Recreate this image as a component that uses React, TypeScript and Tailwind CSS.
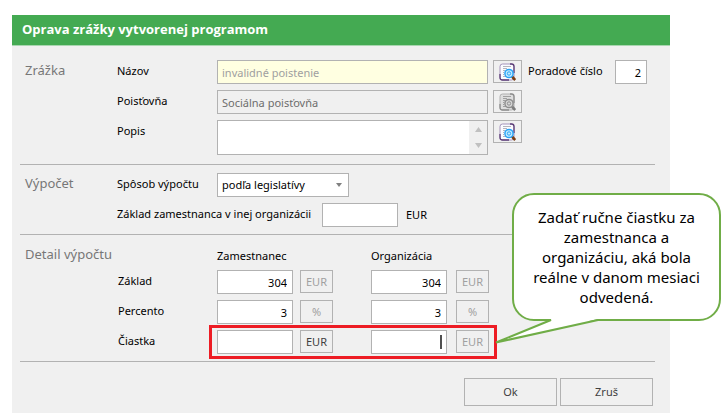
import { useState } from 'react';
import clsx from 'clsx';

const inputClass = 'h-6 border border-[#b2b2b2] bg-white px-[5px] text-right text-black outline-none';

function LookupIcon({ muted = false }: { muted?: boolean }) {
  const frame = muted ? '#8e8e8e' : '#5d3f78';
  const edge = muted ? '#b0b0b0' : '#a493bb';
  const lens = muted ? '#8f8f8f' : '#2ba3f5';
  const glass = muted ? '#d8d8d8' : '#c4ecff';
  const handle = muted ? '#7d7d7d' : '#7a3d12';

  return (
    <svg width="17" height="18" viewBox="0 0 17 18" aria-hidden="true">
      <rect x="1" y="1" width="14" height="16" rx="2.500" fill={muted ? '#dedede' : '#fbfbff'} stroke={edge} />
      <path d="M11 1H12.500Q15 1 15 3.500V10M1 11V14.500Q1 17 3.500 17H10" fill="none" stroke={frame} strokeWidth="1.300" />
      <path d="M4 3.500H12M4 5.500H8M4 7.500H6M4 9.500H5M4 11.500H5M4 13.500H7" stroke={muted ? '#a0a0a0' : '#b4b4be'} />
      <path d="M13 13.500L16.200 17" stroke={handle} strokeWidth="2.600" />
      <circle cx="10" cy="10.500" r="4.100" fill={glass} stroke={lens} strokeWidth="1.500" />
      <circle cx="10" cy="10.500" r="1.700" fill={glass} stroke={lens} />
    </svg>
  );
}

function LookupButton({ label, muted = false }: { label: string; muted?: boolean }) {
  return (
    <button
      type="button"
      aria-label={label}
      disabled={muted}
      className="flex h-[23px] w-[29px] shrink-0 items-center justify-center border border-[#b2b2b2]"
    >
      <LookupIcon muted={muted} />
    </button>
  );
}

function UnitButton({ unit, active = false }: { unit: string; active?: boolean }) {
  return (
    <button
      type="button"
      disabled={!active}
      className={clsx(
        'h-[23px] w-[33px] border border-[#b2b2b2] text-center',
        active ? 'text-[#404040]' : 'text-[#a0a0a0]'
      )}
    >
      {unit}
    </button>
  );
}

function Section({ title, className, children }: { title: string; className?: string; children: React.ReactNode }) {
  return (
    <section className={clsx('flex border-b border-[#b2b2b2] pl-[5px]', className)}>
      <h2 className="w-[92px] shrink-0 whitespace-nowrap text-[13px] leading-5 text-[#777777]">{title}</h2>
      <div className="min-w-0 flex-1">{children}</div>
    </section>
  );
}

const detailRows = [
  { id: 'zaklad', label: 'Základ', value: '304', unit: 'EUR' },
  { id: 'percento', label: 'Percento', value: '3', unit: '%' },
  { id: 'ciastka', label: 'Čiastka', value: '', unit: 'EUR' }
];

function Callout() {
  return (
    <aside className="absolute right-1 top-[193px] w-[209px]">
      <p className="rounded-[22px] border-2 border-[#70ad47] bg-white px-3 py-3 text-center text-[15px] leading-5 text-black">
        Zadať ručne čiastku za zamestnanca a organizáciu, aká bola reálne v danom mesiaci odvedená.
      </p>
      {/* Tail pointing at the amount row */}
      <svg className="absolute -left-5 top-[122px]" width="110" height="32" viewBox="0 0 110 32" aria-hidden="true">
        <path d="M59 1V5L4 27L106 4V1Z" fill="#fff" />
        <path d="M54 5H59L4 27.500L106 5" fill="none" stroke="#70ad47" strokeWidth="2" />
      </svg>
    </aside>
  );
}

export default function App() {
  const [note, setNote] = useState('');

  return (
    <div className="relative bg-white pb-[3px] pl-3 pr-[55px] pt-[15px] font-['Noto_Sans',sans-serif] text-[11px] leading-4 text-black">
      <form className="bg-[#f0f0f0] pb-[7px]" onSubmit={(e) => e.preventDefault()}>
        <h1 className="h-[31px] border-b border-[#a9d6b0] bg-[#44aa52] px-[10px] font-['Open_Sans',sans-serif] text-[13px] font-bold leading-7 text-white">
          Oprava zrážky vytvorenej programom
        </h1>

        <div className="pl-2 pr-[15px]">
          <Section title="Zrážka" className="pb-[9px] pt-[14px]">
            <div className="space-y-[6px]">
              <div className="flex">
                <label htmlFor="nazov" className="w-[100px] shrink-0 leading-[22px]">Názov</label>
                <input
                  id="nazov"
                  readOnly
                  value="invalidné poistenie"
                  className="h-6 w-[271px] border border-[#b2b2b2] bg-[#ffffe1] px-1 text-[#a0a0a0] outline-none"
                />
                <div className="ml-[5px] flex">
                  <LookupButton label="Vybrať názov" />
                </div>
                <label htmlFor="poradie" className="ml-[6px] w-[87px] leading-[22px]">Poradové číslo</label>
                <input id="poradie" defaultValue="2" className={clsx(inputClass, 'w-8')} />
              </div>

              <div className="flex">
                <label htmlFor="poistovna" className="w-[100px] shrink-0 leading-[22px]">Poisťovňa</label>
                <input
                  id="poistovna"
                  readOnly
                  value="Sociálna poisťovňa"
                  className="h-6 w-[271px] border border-[#b2b2b2] bg-[#f0f0f0] px-1 text-[#6d6d6d] outline-none"
                />
                <div className="ml-[5px] flex">
                  <LookupButton label="Vybrať poisťovňu" muted />
                </div>
              </div>

              <div className="flex">
                <label htmlFor="popis" className="w-[100px] shrink-0 leading-[22px]">Popis</label>
                <div className="flex h-[35px] w-[271px] border border-[#b2b2b2] bg-white">
                  <textarea
                    id="popis"
                    value={note}
                    onChange={(e) => setNote(e.target.value)}
                    className="min-w-0 flex-1 resize-none overflow-hidden px-1 outline-none"
                  />
                  <div className="flex w-[18px] flex-col items-center justify-between bg-[#f0f0f0] py-[6px]">
                    <svg width="7" height="5" viewBox="0 0 7 5" aria-hidden="true"><path d="M0 5L3.500 0L7 5Z" fill="#c0c0c0" /></svg>
                    <svg width="7" height="5" viewBox="0 0 7 5" aria-hidden="true"><path d="M0 0L3.500 5L7 0Z" fill="#c0c0c0" /></svg>
                  </div>
                </div>
                <div className="ml-[5px] flex">
                  <LookupButton label="Vybrať popis" />
                </div>
              </div>
            </div>
          </Section>

          <Section title="Výpočet" className="pb-[7px] pt-[8px]">
            <div className="space-y-[6px]">
              <div className="flex">
                <label htmlFor="sposob" className="w-[100px] shrink-0 leading-[22px]">Spôsob výpočtu</label>
                <div className="relative">
                  <select
                    id="sposob"
                    className="h-6 w-[132px] appearance-none border border-[#b2b2b2] bg-white px-1 text-black outline-none"
                  >
                    <option>podľa legislatívy</option>
                  </select>
                  <svg className="pointer-events-none absolute right-[7px] top-[10px]" width="6" height="4" viewBox="0 0 6 4" aria-hidden="true">
                    <path d="M0 0H6L3 4Z" fill="#808080" />
                  </svg>
                </div>
              </div>
              <div className="flex">
                <label htmlFor="ina" className="w-[205px] shrink-0 leading-[22px]">Základ zamestnanca v inej organizácii</label>
                <input id="ina" className={clsx(inputClass, 'w-[76px]')} />
                <span className="ml-2 leading-6">EUR</span>
              </div>
            </div>
          </Section>

          <Section title="Detail výpočtu" className="pb-[7px] pt-[9px]">
            <div className="space-y-[6px]">
              <div className="flex h-5 items-end pl-[100px]">
                <span className="w-[154px]">Zamestnanec</span>
                <span>Organizácia</span>
              </div>
              {detailRows.map((row) => {
                const isAmount = row.id === 'ciastka';

                return (
                  <div key={row.id} className="flex">
                    <label htmlFor={row.id} className="w-[100px] shrink-0 pl-px leading-[22px]">{row.label}</label>
                    <div className="relative flex">
                      <input id={row.id} defaultValue={row.value} className={clsx(inputClass, 'w-[76px]')} />
                      <div className="ml-[7px] w-[71px]">
                        <UnitButton unit={row.unit} active={isAmount} />
                      </div>
                      <div className="relative">
                        <input
                          aria-label={`${row.label} organizácia`}
                          defaultValue={row.value}
                          className={clsx(inputClass, 'block w-[76px]')}
                        />
                        {isAmount && <span className="absolute right-[5px] top-[5px] h-[14px] w-[2px] bg-[#505050]" />}
                      </div>
                      <div className="ml-[9px]">
                        <UnitButton unit={row.unit} />
                      </div>
                      {isAmount && (
                        <div className="pointer-events-none absolute -inset-x-2 -bottom-[5px] -top-[5px] border-3 border-[#ed1c24]" />
                      )}
                    </div>
                  </div>
                );
              })}
            </div>
          </Section>

          <div className="flex justify-end gap-[3px] pr-[2px] pt-4">
            <button type="submit" className="h-7 w-[93px] border border-[#b2b2b2] text-[#404040]">Ok</button>
            <button type="button" className="h-7 w-[93px] border border-[#b2b2b2] text-[#404040]">Zruš</button>
          </div>
        </div>
      </form>

      <Callout />
    </div>
  );
}
